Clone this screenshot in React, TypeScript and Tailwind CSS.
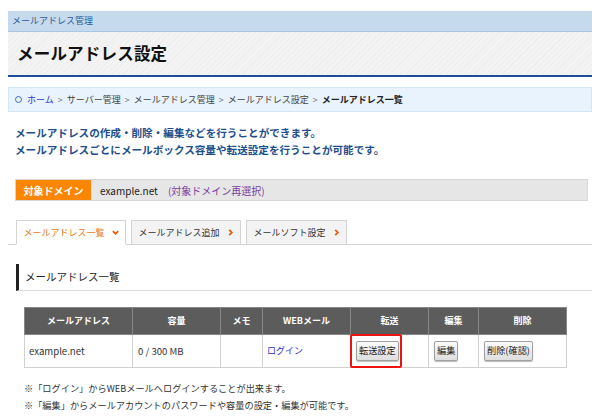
const jp = "font-['Meiryo','Noto_Sans_CJK_JP',sans-serif]";

function Chevron({ dir = 'right' }: { dir?: 'right' | 'down' }) {
  return (
    <svg width="7" height="7" viewBox="0 0 8 8" className="ml-[7px]">
      {dir === 'right' ? (
        <path d="M2.5 1 L5.5 4 L2.5 7" fill="none" stroke="#e8590c" strokeWidth="2" />
      ) : (
        <path d="M1 2.5 L4 5.5 L7 2.5" fill="none" stroke="#e8590c" strokeWidth="2" />
      )}
    </svg>
  );
}

function Btn({ children }: { children: React.ReactNode }) {
  return (
    <span className="inline-flex items-center h-[20px] px-[2px] text-[9.2px] text-[#222] bg-gradient-to-b from-[#fbfbfb] to-[#dedede] border border-[#a0a0a0] rounded-[2px] shadow-[0_1px_1px_#bbb]">
      {children}
    </span>
  );
}

export default function App() {
  const cols = [
    { label: 'メールアドレス', w: 'w-[108px]' },
    { label: '容量', w: 'w-[88px]' },
    { label: 'メモ', w: 'w-[42px]' },
    { label: 'WEBメール', w: 'w-[88px]' },
    { label: '転送', w: 'w-[78px]' },
    { label: '編集', w: 'w-[50px]' },
    { label: '削除', w: 'w-[88px]' },
  ];

  return (
    <div className={`${jp} w-[600px] h-[420px] bg-white pt-[11px] px-2 text-[#333]`}>
      {/* top bar */}
      <div className="h-[21px] bg-[#c6daed] border-b border-[#a9c6e3] flex items-center pl-[4px] text-[9px] text-[#2c5a97]">
        メールアドレス管理
      </div>
      {/* title */}
      <div className="h-[45px] flex items-center pl-[9px] bg-[repeating-linear-gradient(135deg,#f3f3f3_0px,#f3f3f3_3px,#eeeeee_3px,#eeeeee_4px)] border-b-[2px] border-[#1b4d99]">
        <h1 className="text-[16.5px] font-bold text-[#111] tracking-[0.2px]">メールアドレス設定</h1>
      </div>
      {/* breadcrumb */}
      <div className="mt-[10px] h-[25px] flex items-center pl-[6px] bg-[#e8f3fd] border border-[#d3e6f7] text-[9px] text-[#444]">
        <span className="inline-block w-[7px] h-[7px] rounded-full border-[1.5px] border-[#3a6fc0] mr-[5px]" />
        <span className="text-[#3333dd]">ホーム</span>
        <span className="mx-[4px] text-[#777]">&gt;</span>
        <span>サーバー管理</span>
        <span className="mx-[4px] text-[#777]">&gt;</span>
        <span>メールアドレス管理</span>
        <span className="mx-[4px] text-[#777]">&gt;</span>
        <span>メールアドレス設定</span>
        <span className="mx-[4px] text-[#777]">&gt;</span>
        <span className="font-bold text-[#222]">メールアドレス一覧</span>
      </div>
      {/* description */}
      <div className="mt-[12px] pl-[7px] text-[10.6px] leading-[17px] font-bold text-[#1d4f8c]">
        <p>メールアドレスの作成・削除・編集などを行うことができます。</p>
        <p>メールアドレスごとにメールボックス容量や転送設定を行うことが可能です。</p>
      </div>
      {/* domain */}
      <div className="mt-[21px] ml-[7px] mr-[4px] h-[22px] flex items-stretch bg-[#e6e6e6] border border-[#d6d6d6] text-[10px]">
        <div className="w-[75px] bg-[#fb8604] text-white font-bold flex items-center justify-center">対象ドメイン</div>
        <div className="flex items-center pl-[9px] text-[#222]">
          example.net
          <span className="ml-[10px] text-[#7a3ea0]">(対象ドメイン再選択)</span>
        </div>
      </div>
      {/* tabs */}
      <div className="mt-[20px] flex items-end gap-[5px] pl-[8px] border-b border-[#d4d4d4] h-[24px] text-[9px]">
        <div className="w-[110px] h-[25px] -mb-px bg-white border border-[#d4d4d4] border-b-white flex items-center justify-center text-[#ee7a1a]">
          メールアドレス一覧<Chevron dir="down" />
        </div>
        <div className="w-[110px] h-[24px] bg-[#f3f3f3] border border-b-0 border-[#d4d4d4] flex items-center justify-center text-[#333]">
          メールアドレス追加<Chevron />
        </div>
        <div className="w-[101px] h-[24px] bg-[#f3f3f3] border border-b-0 border-[#d4d4d4] flex items-center justify-center text-[#333]">
          メールソフト設定<Chevron />
        </div>
      </div>
      {/* section heading */}
      <div className="mt-[19px] ml-[8px] h-[27px] flex items-center border-l-[3px] border-[#222] border-b border-b-[#dcdcdc] pl-[6px] text-[10.5px] text-[#222]">
        メールアドレス一覧
      </div>
      {/* table */}
      <table className="mt-[16px] ml-[16px] border-collapse text-[9.6px]">
        <thead>
          <tr className="h-[27px] bg-[#5c5c5c] text-white text-[9px]">
            {cols.map((c) => (
              <th key={c.label} className={`${c.w} border border-[#888] font-bold`}>{c.label}</th>
            ))}
          </tr>
        </thead>
        <tbody>
          <tr className="h-[33px] text-[#333]">
            <td className="border border-[#d0d0d0] pl-[4px]">example.net</td>
            <td className="border border-[#d0d0d0] pl-[5px]">0 / 300 MB</td>
            <td className="border border-[#d0d0d0]"></td>
            <td className="border border-[#d0d0d0] pl-[4px] text-[#2b2bd6] text-[9px]">ログイン</td>
            <td className="border border-[#d0d0d0] pl-[5px] relative">
              <span className="absolute left-[-1px] top-[-1px] w-[52px] h-[34px] border-2 border-[#ee1111] rounded-[2px]" />
              <Btn>転送設定</Btn>
            </td>
            <td className="border border-[#d0d0d0] pl-[5px]"><Btn>編集</Btn></td>
            <td className="border border-[#d0d0d0] pl-[5px]"><Btn>削除(確認)</Btn></td>
          </tr>
        </tbody>
      </table>
      {/* notes */}
      <div className="mt-[12px] pl-[16px] text-[9.2px] leading-[17px] text-[#333]">
        <p>※「ログイン」からWEBメールへログインすることが出来ます。</p>
        <p>※「編集」からメールアカウントのパスワードや容量の設定・編集が可能です。</p>
      </div>
    </div>
  );
}
